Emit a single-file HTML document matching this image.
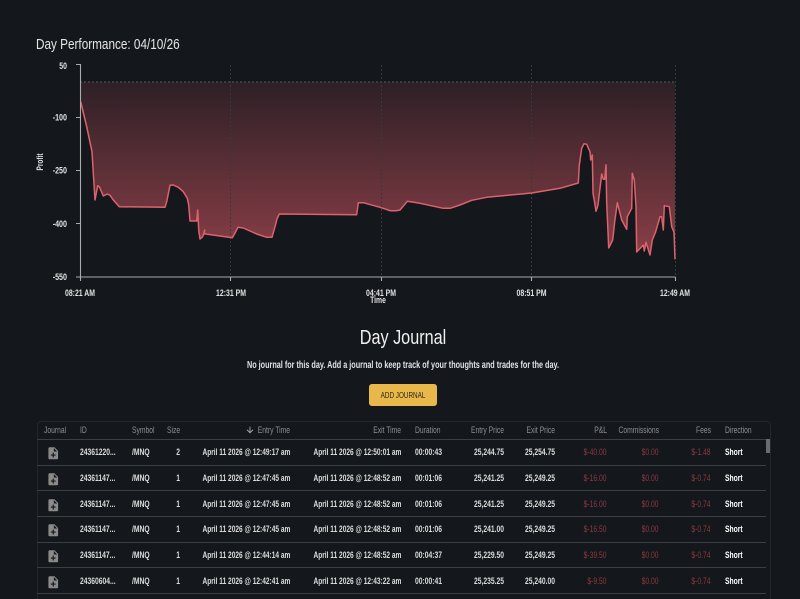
<!DOCTYPE html>
<html lang="en">
<head>
<meta charset="utf-8">
<title>Day Performance</title>
<style>
*{box-sizing:border-box}
html,body{margin:0;padding:0;width:800px;height:599px;overflow:hidden;background:#14171c}
body{position:relative;font-family:"Liberation Sans",sans-serif;color:#e8e8e8}
#w{position:absolute;left:0;top:0;width:800px;height:599px;overflow:hidden;filter:blur(.35px)}
.abs{position:absolute;white-space:nowrap}
#title{left:36px;top:37px;font-size:14.5px;line-height:17px;color:#e6e6e6;transform:scaleX(.81);transform-origin:left center}
#chart{position:absolute;left:0;top:0}
#chart text{font-family:"Liberation Sans",sans-serif;font-size:8.8px;fill:#e2e2e2;font-weight:bold}
#h{left:0;width:806px;text-align:center;top:325px;font-size:20.5px;line-height:25px;color:#f0f0f0;transform:scaleX(.79);transform-origin:403px center}
#p{left:0;width:806px;text-align:center;top:360px;font-size:10px;line-height:12px;font-weight:bold;color:#dfe2e6;transform:scaleX(.725);transform-origin:403px center}
#b{left:369px;top:384px;width:68px;height:22px;background:#e8b94a;border-radius:3px}
#bt{left:369px;top:384px;width:68px;color:#2a2416;font-size:8.5px;line-height:22px;text-align:center;transform:scaleX(.745)}
#t{position:absolute;left:37px;top:421px;width:734px;height:190px;border:1px solid #24272c;border-radius:4px}
.r{position:absolute;left:37px;width:729px;height:18px;font-size:9px;line-height:18px;font-weight:bold;color:#dcdcdc}
.r span{position:absolute;white-space:nowrap;top:0;transform:scaleX(.75);transform-origin:left center}
.hd{top:421px}
.hd span{font-weight:normal;color:#8d8f92}
.line{position:absolute;left:37px;width:729px;height:1px;background:#3b3e43}
.a{left:7px}.b{left:43px}.c{left:95px}
.g{left:378px}.n{left:688px}
.r .d,.r .e,.r .f,.r .i,.r .j,.r .k,.r .l,.r .m{transform-origin:right center}
.r:not(.hd) .e,.r:not(.hd) .f{transform:scaleX(.73)}
.d{right:586px}.e{right:476px}.f{right:365px}
.i{right:262px}.j{right:210.5px}.k{right:159px}.l{right:107px}.m{right:55px}
.r .red{color:#8e3a40;font-weight:normal}
.r .w{color:#fff}
.r svg.ic{position:absolute;left:8.6px;top:2.5px;width:14.5px;height:14.5px;fill:#8a8a8a}
.hd svg{position:absolute;left:208px;top:4px;width:10px;height:10px;fill:#b8b8b8}
#sb{position:absolute;left:766px;top:439px;width:4px;height:14px;background:#6a6d70}
</style>
</head>
<body>
<div id="w">
<div class="abs" id="title">Day Performance: 04/10/26</div>

<svg id="chart" width="800" height="320" viewBox="0 0 800 320">
<defs>
<linearGradient id="g" x1="0" y1="82" x2="0" y2="255" gradientUnits="userSpaceOnUse">
<stop offset="0" stop-color="#2d2026"/>
<stop offset="1" stop-color="#8a3e47"/>
</linearGradient>
</defs>
<path fill="url(#g)" d="M80.7 82V101.7L86.7 126.7L92 151.7L93.3 173L95 200L97.7 185.7L99.3 186.7L103.3 196L107.3 194L110 195.3L113.3 200L119.3 206.7L165 207.3L166.7 201.7L170 185.3L173.3 185L178.3 187.3L183.3 191.7L187.3 198.3L188.7 205L190 221L196.7 221L197.7 210L198.7 230L200 239L202.7 236.7L204.7 230L204 233.7L232.3 237.7L235 233L238 227.3L243.3 228L256.7 234L266.7 237.3L272 237.3L275 226.7L277 219L279.3 214L356.7 214.7L358.3 202.7L363.3 202.7L380 207.3L390 210.7L396.7 210.7L400 210L407.3 201.3L420 203.3L443.3 208.3L450 208.3L460 205L471.7 200.3L486.7 197.3L531.7 193L560 188.3L578.3 183L579.3 165L581.7 148.3L584 143.7L586.7 144.3L590 151.7L590.7 160L592.3 155L593 193.3L594.7 202.7L596 211.3L598 205L601.7 174L603.3 179.3L604.7 179.3L606 164.7L606.7 203L608.7 248L612.7 240L614.7 221.7L617.3 202.7L621.7 220L626.7 229.3L627.3 216.7L631.7 208.3L632.3 173.3L634.3 180L636 206.7L636.7 252L643.3 245L644.3 251L646 242.3L650 255L652.3 240L655.7 231.7L660 216.7L661.7 216.7L663.3 230L664.3 205.7L669.3 206.7L671.7 226.7L674 232.3L675 259.3V82Z"/>
<g stroke-width="1" stroke-dasharray="2 2" fill="none">
<path d="M80 82H675" stroke="#57595c"/>
<path d="M230.5 65V277M381.5 65V277M531.5 65V277M675.5 65V277" stroke="#36393e"/>
</g>
<path fill="none" stroke="#dc626c" stroke-width="1.5" stroke-linejoin="round" d="M80.7 101.7L86.7 126.7L92 151.7L93.3 173L95 200L97.7 185.7L99.3 186.7L103.3 196L107.3 194L110 195.3L113.3 200L119.3 206.7L165 207.3L166.7 201.7L170 185.3L173.3 185L178.3 187.3L183.3 191.7L187.3 198.3L188.7 205L190 221L196.7 221L197.7 210L198.7 230L200 239L202.7 236.7L204.7 230L204 233.7L232.3 237.7L235 233L238 227.3L243.3 228L256.7 234L266.7 237.3L272 237.3L275 226.7L277 219L279.3 214L356.7 214.7L358.3 202.7L363.3 202.7L380 207.3L390 210.7L396.7 210.7L400 210L407.3 201.3L420 203.3L443.3 208.3L450 208.3L460 205L471.7 200.3L486.7 197.3L531.7 193L560 188.3L578.3 183L579.3 165L581.7 148.3L584 143.7L586.7 144.3L590 151.7L590.7 160L592.3 155L593 193.3L594.7 202.7L596 211.3L598 205L601.7 174L603.3 179.3L604.7 179.3L606 164.7L606.7 203L608.7 248L612.7 240L614.7 221.7L617.3 202.7L621.7 220L626.7 229.3L627.3 216.7L631.7 208.3L632.3 173.3L634.3 180L636 206.7L636.7 252L643.3 245L644.3 251L646 242.3L650 255L652.3 240L655.7 231.7L660 216.7L661.7 216.7L663.3 230L664.3 205.7L669.3 206.7L671.7 226.7L674 232.3L675 259.3"/>
<path fill="none" stroke="#a9abad" stroke-width="1.1" d="M80.5 64V277H675.5M76 64.5H80M76 117.5H80M76 170.5H80M76 223.5H80M76 277H80M80.5 277V281M230.5 277V281M381.5 277V281M531.5 277V281M675.5 277V281"/>
<g text-anchor="end">
<text x="67" y="69" textLength="7.7" lengthAdjust="spacingAndGlyphs">50</text>
<text x="67" y="120.5" textLength="14.3" lengthAdjust="spacingAndGlyphs">-100</text>
<text x="67" y="173.5" textLength="14.3" lengthAdjust="spacingAndGlyphs">-250</text>
<text x="67" y="227" textLength="14.3" lengthAdjust="spacingAndGlyphs">-400</text>
<text x="67" y="280" textLength="14.3" lengthAdjust="spacingAndGlyphs">-550</text>
</g>
<g text-anchor="middle">
<text x="80" y="296" textLength="30" lengthAdjust="spacingAndGlyphs">08:21 AM</text>
<text x="231" y="296" textLength="30" lengthAdjust="spacingAndGlyphs">12:31 PM</text>
<text x="381" y="296" textLength="30" lengthAdjust="spacingAndGlyphs">04:41 PM</text>
<text x="531.5" y="296" textLength="30" lengthAdjust="spacingAndGlyphs">08:51 PM</text>
<text x="675" y="296" textLength="30" lengthAdjust="spacingAndGlyphs">12:49 AM</text>
<text x="378" y="303" textLength="15.7" lengthAdjust="spacingAndGlyphs">Time</text>
<text transform="translate(43 162) rotate(-90)" textLength="17" lengthAdjust="spacingAndGlyphs">Profit</text>
</g>
</svg>

<div class="abs" id="h">Day Journal</div>
<div class="abs" id="p">No journal for this day. Add a journal to keep track of your thoughts and trades for the day.</div>
<div class="abs" id="b"></div>
<div class="abs" id="bt">ADD JOURNAL</div>

<div id="t"></div>
<div class="r hd"><span class="a">Journal</span><span class="b">ID</span><span class="c">Symbol</span><span style="left:130px">Size</span><svg viewBox="0 0 24 24"><path d="M20 12l-1.41-1.41L13 16.17V4h-2v12.17l-5.58-5.59L4 12l8 8 8-8z"/></svg><span class="e">Entry Time</span><span class="f">Exit Time</span><span class="g">Duration</span><span class="i">Entry Price</span><span class="j">Exit Price</span><span class="k">P&amp;L</span><span class="l">Commissions</span><span class="m">Fees</span><span class="n">Direction</span></div>

<div class="line" style="top:439px"></div>
<div class="r" style="top:443px"><svg class="ic" viewBox="0 0 24 24"><path d="M14 2H6c-1.1 0-1.99.9-1.99 2L4 20c0 1.1.89 2 1.99 2H18c1.1 0 2-.9 2-2V8l-6-6zm2 14h-3v3h-2v-3H8v-2h3v-3h2v3h3v2zm-3-7V3.5L18.5 9H13z"/></svg><span class="b">24361220...</span><span class="c">/MNQ</span><span class="d">2</span><span class="e">April 11 2026 @ 12:49:17 am</span><span class="f">April 11 2026 @ 12:50:01 am</span><span class="g">00:00:43</span><span class="i">25,244.75</span><span class="j">25,254.75</span><span class="k red">$-40.00</span><span class="l red">$0.00</span><span class="m red">$-1.48</span><span class="n w">Short</span></div>
<div class="line" style="top:465px"></div>
<div class="r" style="top:469px"><svg class="ic" viewBox="0 0 24 24"><path d="M14 2H6c-1.1 0-1.99.9-1.99 2L4 20c0 1.1.89 2 1.99 2H18c1.1 0 2-.9 2-2V8l-6-6zm2 14h-3v3h-2v-3H8v-2h3v-3h2v3h3v2zm-3-7V3.5L18.5 9H13z"/></svg><span class="b">24361147...</span><span class="c">/MNQ</span><span class="d">1</span><span class="e">April 11 2026 @ 12:47:45 am</span><span class="f">April 11 2026 @ 12:48:52 am</span><span class="g">00:01:06</span><span class="i">25,241.25</span><span class="j">25,249.25</span><span class="k red">$-16.00</span><span class="l red">$0.00</span><span class="m red">$-0.74</span><span class="n w">Short</span></div>
<div class="line" style="top:490px"></div>
<div class="r" style="top:495px"><svg class="ic" viewBox="0 0 24 24"><path d="M14 2H6c-1.1 0-1.99.9-1.99 2L4 20c0 1.1.89 2 1.99 2H18c1.1 0 2-.9 2-2V8l-6-6zm2 14h-3v3h-2v-3H8v-2h3v-3h2v3h3v2zm-3-7V3.5L18.5 9H13z"/></svg><span class="b">24361147...</span><span class="c">/MNQ</span><span class="d">1</span><span class="e">April 11 2026 @ 12:47:45 am</span><span class="f">April 11 2026 @ 12:48:52 am</span><span class="g">00:01:06</span><span class="i">25,241.25</span><span class="j">25,249.25</span><span class="k red">$-16.00</span><span class="l red">$0.00</span><span class="m red">$-0.74</span><span class="n w">Short</span></div>
<div class="line" style="top:516px"></div>
<div class="r" style="top:520px"><svg class="ic" viewBox="0 0 24 24"><path d="M14 2H6c-1.1 0-1.99.9-1.99 2L4 20c0 1.1.89 2 1.99 2H18c1.1 0 2-.9 2-2V8l-6-6zm2 14h-3v3h-2v-3H8v-2h3v-3h2v3h3v2zm-3-7V3.5L18.5 9H13z"/></svg><span class="b">24361147...</span><span class="c">/MNQ</span><span class="d">1</span><span class="e">April 11 2026 @ 12:47:45 am</span><span class="f">April 11 2026 @ 12:48:52 am</span><span class="g">00:01:06</span><span class="i">25,241.00</span><span class="j">25,249.25</span><span class="k red">$-16.50</span><span class="l red">$0.00</span><span class="m red">$-0.74</span><span class="n w">Short</span></div>
<div class="line" style="top:542px"></div>
<div class="r" style="top:546px"><svg class="ic" viewBox="0 0 24 24"><path d="M14 2H6c-1.1 0-1.99.9-1.99 2L4 20c0 1.1.89 2 1.99 2H18c1.1 0 2-.9 2-2V8l-6-6zm2 14h-3v3h-2v-3H8v-2h3v-3h2v3h3v2zm-3-7V3.5L18.5 9H13z"/></svg><span class="b">24361147...</span><span class="c">/MNQ</span><span class="d">1</span><span class="e">April 11 2026 @ 12:44:14 am</span><span class="f">April 11 2026 @ 12:48:52 am</span><span class="g">00:04:37</span><span class="i">25,229.50</span><span class="j">25,249.25</span><span class="k red">$-39.50</span><span class="l red">$0.00</span><span class="m red">$-0.74</span><span class="n w">Short</span></div>
<div class="line" style="top:567px"></div>
<div class="r" style="top:572px"><svg class="ic" viewBox="0 0 24 24"><path d="M14 2H6c-1.1 0-1.99.9-1.99 2L4 20c0 1.1.89 2 1.99 2H18c1.1 0 2-.9 2-2V8l-6-6zm2 14h-3v3h-2v-3H8v-2h3v-3h2v3h3v2zm-3-7V3.5L18.5 9H13z"/></svg><span class="b">24360604...</span><span class="c">/MNQ</span><span class="d">1</span><span class="e">April 11 2026 @ 12:42:41 am</span><span class="f">April 11 2026 @ 12:43:22 am</span><span class="g">00:00:41</span><span class="i">25,235.25</span><span class="j">25,240.00</span><span class="k red">$-9.50</span><span class="l red">$0.00</span><span class="m red">$-0.74</span><span class="n w">Short</span></div>
<div class="line" style="top:593px"></div>
<div id="sb"></div>
</div>
</body>
</html>
